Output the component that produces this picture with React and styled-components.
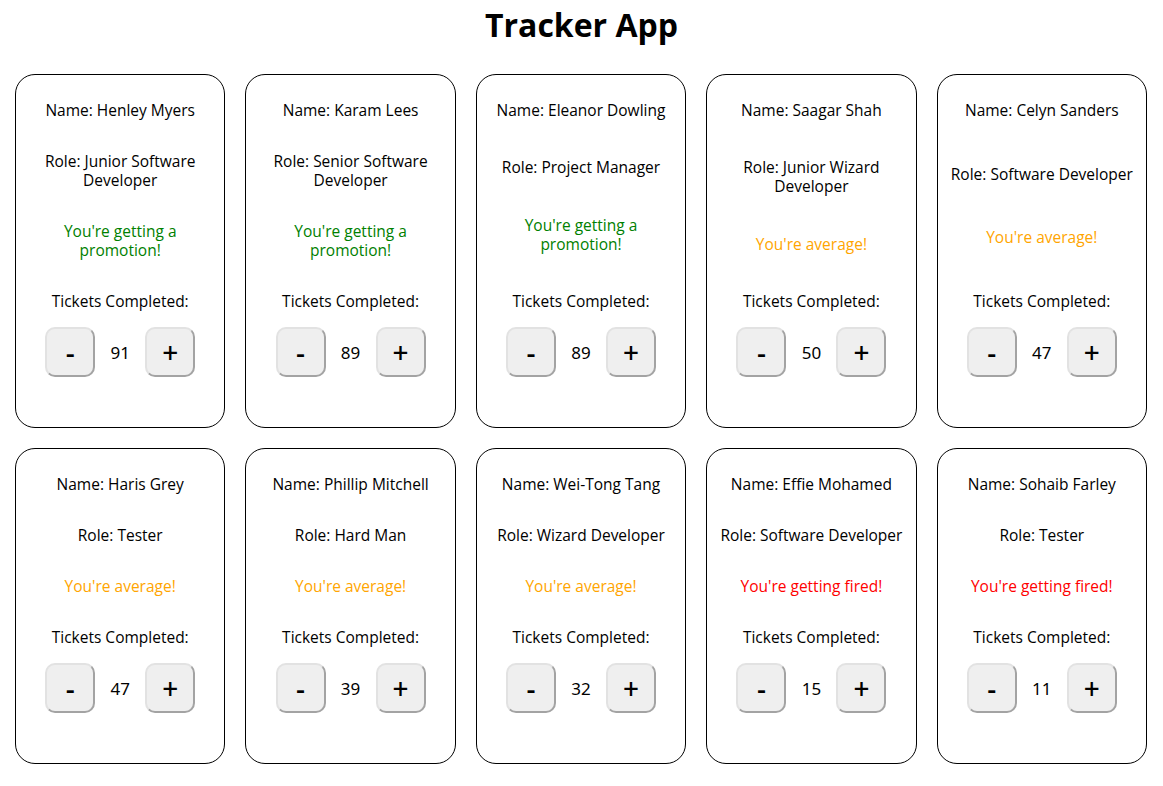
import React, { useState } from "react";
import styled, { createGlobalStyle } from "styled-components";

const GlobalStyle = createGlobalStyle`
  body {
    margin: 0;
    font-family: "Open Sans", "Noto Sans", sans-serif;
    background: #ffffff;
    color: #000000;
  }
`;

const Title = styled.h1`
  margin: 6px 0 0;
  text-align: center;
  font-size: 32px;
  line-height: 37px;
  font-weight: 700;
`;

const Grid = styled.div`
  display: grid;
  grid-template-columns: repeat(5, 1fr);
  gap: 20px;
  padding: 31px 16px 20px 15px;
`;

const Card = styled.div`
  display: flex;
  flex-direction: column;
  border: 1px solid #000;
  border-radius: 20px;
  padding: 10px 8px 50px;
  text-align: center;
`;

const Info = styled.div`
  flex: 1;
  display: flex;
  flex-direction: column;
  justify-content: space-between;
`;

const Line = styled.p`
  margin: 16px 0;
  font-size: 15.5px;
  line-height: 19px;
  color: ${(p) => p.$color || "#000"};
`;

const Counter = styled.div`
  display: flex;
  align-items: center;
  justify-content: center;
`;

const CountButton = styled.button`
  width: 50px;
  height: 50px;
  border-radius: 10px;
  background: #efefef;
  border: 2px solid;
  border-color: #e2e2e2 #a3a3a3 #a3a3a3 #e2e2e2;
  font-family: "Noto Sans", sans-serif;
  font-size: 28px;
  font-weight: 500;
  line-height: 1;
  color: #000;
  padding: 0;
`;

const Count = styled.span`
  width: 50px;
  font-family: "Noto Sans", sans-serif;
  font-size: 17px;
`;

const people = [
  { name: "Henley Myers", role: "Junior Software Developer", tickets: 91 },
  { name: "Karam Lees", role: "Senior Software Developer", tickets: 89 },
  { name: "Eleanor Dowling", role: "Project Manager", tickets: 89 },
  { name: "Saagar Shah", role: "Junior Wizard Developer", tickets: 50 },
  { name: "Celyn Sanders", role: "Software Developer", tickets: 47 },
  { name: "Haris Grey", role: "Tester", tickets: 47 },
  { name: "Phillip Mitchell", role: "Hard Man", tickets: 39 },
  { name: "Wei-Tong Tang", role: "Wizard Developer", tickets: 32 },
  { name: "Effie Mohamed", role: "Software Developer", tickets: 15 },
  { name: "Sohaib Farley", role: "Tester", tickets: 11 },
];

function status(t) {
  if (t > 80) return { text: "You're getting a promotion!", color: "#008000" };
  if (t >= 20) return { text: "You're average!", color: "#ffa500" };
  return { text: "You're getting fired!", color: "#ff0000" };
}

function EmployeeCard({ person }) {
  const [tickets, setTickets] = useState(person.tickets);
  const s = status(tickets);
  return (
    <Card>
      <Info>
        <Line>Name: {person.name}</Line>
        <Line>Role: {person.role}</Line>
        <Line $color={s.color}>{s.text}</Line>
        <Line>Tickets Completed:</Line>
      </Info>
      <Counter>
        <CountButton onClick={() => setTickets(tickets - 1)}>-</CountButton>
        <Count>{tickets}</Count>
        <CountButton onClick={() => setTickets(tickets + 1)}>+</CountButton>
      </Counter>
    </Card>
  );
}

export default function App() {
  return (
    <>
      <GlobalStyle />
      <Title>Tracker App</Title>
      <Grid>
        {people.map((p) => (
          <EmployeeCard key={p.name} person={p} />
        ))}
      </Grid>
    </>
  );
}
